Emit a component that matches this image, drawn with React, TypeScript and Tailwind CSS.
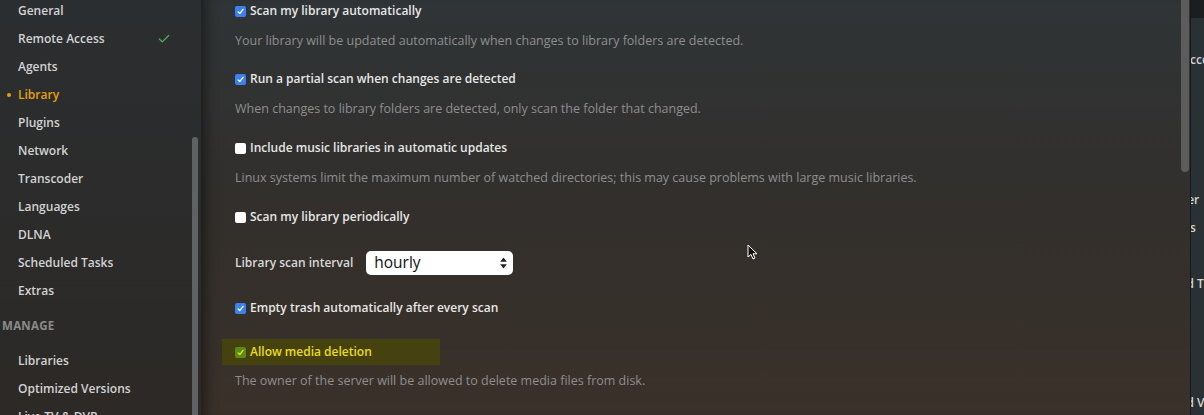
import { Check } from 'lucide-react';

const navItems = [
  { label: 'General' },
  { label: 'Remote Access', ok: true },
  { label: 'Agents' },
  { label: 'Library', active: true },
  { label: 'Plugins' },
  { label: 'Network' },
  { label: 'Transcoder' },
  { label: 'Languages' },
  { label: 'DLNA' },
  { label: 'Scheduled Tasks' },
  { label: 'Extras' },
];

const manageItems = ['Libraries', 'Optimized Versions', 'Live TV & DVR'];

function Box({ checked, tone = 'blue' }: { checked: boolean; tone?: 'blue' | 'olive' }) {
  if (!checked) {
    return <span className="w-[11px] h-[11px] rounded-[2px] bg-white shrink-0" />;
  }
  return (
    <span
      className={
        tone === 'olive'
          ? 'w-[11px] h-[11px] rounded-[2px] bg-[#5b8a1c] shrink-0 flex items-center justify-center'
          : 'w-[11px] h-[11px] rounded-[2px] bg-[#3b82f0] shrink-0 flex items-center justify-center'
      }
    >
      <svg width="9" height="9" viewBox="0 0 10 10" fill="none">
        <path
          d="M2.3 5.4 L4.2 7.3 L7.8 2.6"
          stroke={tone === 'olive' ? '#f2e200' : '#ffffff'}
          strokeWidth="1.5"
          strokeLinecap="round"
          strokeLinejoin="round"
        />
      </svg>
    </span>
  );
}

function Option({ label, checked }: { label: string; checked: boolean }) {
  return (
    <div className="flex items-center gap-[4px] h-[22px]">
      <Box checked={checked} />
      <span className="text-[12px] font-semibold text-[#e6e6e6]">{label}</span>
    </div>
  );
}

function Hint({ children, className = '' }: { children: React.ReactNode; className?: string }) {
  return <p className={'text-[12.5px] leading-[22px] text-[#8e8e8e] ' + className}>{children}</p>;
}

function Sidebar() {
  return (
    <aside className="relative w-[201px] shrink-0 h-full bg-gradient-to-b from-[#2b2e30] to-[#2c2926] overflow-hidden">
      <ul className="-mt-[3px]">
        {navItems.map((item) => (
          <li key={item.label} className="relative h-[28px] flex items-center pl-[18px]">
            {item.active && (
              <span className="absolute left-[7px] top-[12px] w-[4px] h-[4px] rounded-full bg-[#e5a00d]" />
            )}
            <span
              className={
                item.active
                  ? 'text-[12px] font-semibold text-[#e5a00d]'
                  : 'text-[12px] font-semibold text-[#d2d2d2]'
              }
            >
              {item.label}
            </span>
            {item.ok && <Check className="absolute left-[157px] top-[7px] text-[#4cbb4c]" size={14} strokeWidth={2} />}
          </li>
        ))}
      </ul>
      <div className="pl-[2px] mt-[7px] h-[28px] flex items-center text-[11.5px] font-bold text-[#8a8a8a] tracking-wide">
        MANAGE
      </div>
      <ul className="mt-[7px]">
        {manageItems.map((m) => (
          <li key={m} className="h-[28px] flex items-center pl-[18px] text-[12px] font-semibold text-[#d2d2d2] whitespace-nowrap">
            {m}
          </li>
        ))}
      </ul>
      <div className="absolute left-[192px] top-[137px] w-[6px] h-[300px] rounded-t-full bg-[#5e6264]" />
    </aside>
  );
}

function Cursor() {
  return (
    <svg className="absolute left-[546px] top-[244px]" width="12" height="17" viewBox="0 0 12 17">
      <path
        d="M1 1 L1 13 L4 10.5 L6 15 L8 14 L6 9.8 L10 9.8 Z"
        fill="#111"
        stroke="#fff"
        strokeWidth="1"
        strokeLinejoin="round"
      />
    </svg>
  );
}

// edge of another window peeking in on the right
function BehindWindow() {
  const ghost = [
    'Remote Access',
    'Agents',
    'Library',
    'Plugins',
    'Network',
    'Transcoder',
    'Languages',
    'DLNA',
    'Scheduled Tasks',
    'Extras',
  ];
  return (
    <div className="w-[14px] shrink-0 h-full border-l border-[#161819] bg-[#2a3135] overflow-hidden flex flex-col">
      <div className="h-[18px] shrink-0 bg-[#1b1d1e]" />
      <ul className="pt-[28px] -ml-[57px]">
        {ghost.map((g) => (
          <li key={g} className="h-[28px] flex items-center text-[12px] font-semibold text-[#d4d4d4] whitespace-nowrap">
            {g}
          </li>
        ))}
        <li className="h-[35px]" />
        <li className="h-[28px]" />
        <li className="h-[28px] flex items-center text-[12px] font-semibold text-[#d4d4d4] whitespace-nowrap">
          Optimized Versions
        </li>
      </ul>
    </div>
  );
}

export default function App() {
  return (
    <div
      className="w-[1204px] h-[415px] flex overflow-hidden bg-[#2c2f31]"
      style={{ fontFamily: '"Open Sans", "Noto Sans", sans-serif' }}
    >
      <Sidebar />
      <main className="relative flex-1 h-full bg-gradient-to-b from-[#2f3436] via-[#322f2c] to-[#3a3129] shadow-[inset_14px_0_14px_-10px_rgba(0,0,0,0.45)]">
        <div className="pl-[34px]">
          <Option label="Scan my library automatically" checked />
          <Hint className="mt-[8px]">Your library will be updated automatically when changes to library folders are detected.</Hint>

          <div className="mt-[16px]">
            <Option label="Run a partial scan when changes are detected" checked />
          </div>
          <Hint className="mt-[8px]">When changes to library folders are detected, only scan the folder that changed.</Hint>

          <div className="mt-[17px]">
            <Option label="Include music libraries in automatic updates" checked={false} />
          </div>
          <Hint className="mt-[8px]">
            Linux systems limit the maximum number of watched directories; this may cause problems with large music libraries.
          </Hint>

          <div className="mt-[17px]">
            <Option label="Scan my library periodically" checked={false} />
          </div>

          <div className="mt-[23px] flex items-center gap-[13px] h-[24px]">
            <span className="text-[12px] font-semibold text-[#d8d8d8]">Library scan interval</span>
            <div className="w-[147px] h-[24px] rounded-[5px] bg-white flex items-center justify-between pl-[8px] pr-[6px]">
              <span className="text-[15.5px] font-medium text-[#111]">hourly</span>
              <svg width="7" height="12" viewBox="0 0 7 12">
                <path d="M3.5 0.5 L6.8 4.8 L0.2 4.8 Z" fill="#222" />
                <path d="M3.5 11.5 L6.8 7.2 L0.2 7.2 Z" fill="#222" />
              </svg>
            </div>
          </div>

          <div className="mt-[22px]">
            <Option label="Empty trash automatically after every scan" checked />
          </div>

          <div className="mt-[20px] -ml-[13px] pl-[13px] w-[218px] h-[26px] flex items-center gap-[4px] bg-[#46420f]">
            <Box checked tone="olive" />
            <span className="text-[12px] font-semibold text-[#ecdc12]">Allow media deletion</span>
          </div>
          <Hint className="mt-[5px]">The owner of the server will be allowed to delete media files from disk.</Hint>
        </div>

        <div className="absolute right-[1px] top-0 w-[8px] h-[172px] rounded-b-full bg-[#5c5c5c]" />
        <Cursor />
      </main>
      <BehindWindow />
    </div>
  );
}
